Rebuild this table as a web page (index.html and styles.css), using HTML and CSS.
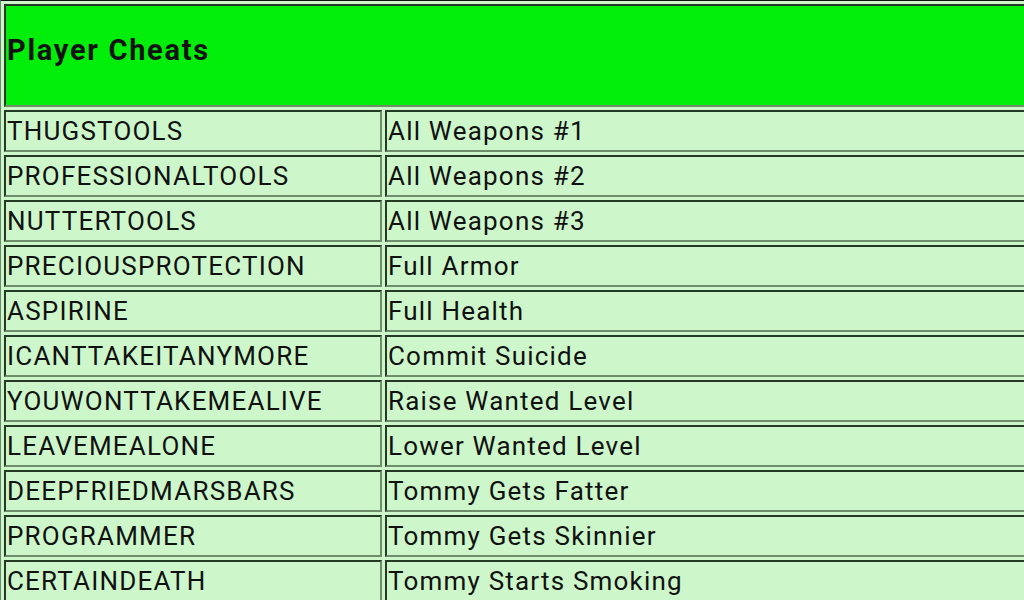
FILE: index.html
```html
<!DOCTYPE html>
<html>
<head>
<meta charset="utf-8">
<link rel="stylesheet" href="styles.css">
</head>
<body>
<div class="page">
<table class="cheats">
  <thead>
    <tr><th colspan="2" class="head">Player Cheats</th></tr>
  </thead>
  <tbody>
    <tr><td class="code">THUGSTOOLS</td><td class="desc">All Weapons #1</td></tr>
    <tr><td class="code">PROFESSIONALTOOLS</td><td class="desc">All Weapons #2</td></tr>
    <tr><td class="code">NUTTERTOOLS</td><td class="desc">All Weapons #3</td></tr>
    <tr><td class="code">PRECIOUSPROTECTION</td><td class="desc">Full Armor</td></tr>
    <tr><td class="code">ASPIRINE</td><td class="desc">Full Health</td></tr>
    <tr><td class="code">ICANTTAKEITANYMORE</td><td class="desc">Commit Suicide</td></tr>
    <tr><td class="code">YOUWONTTAKEMEALIVE</td><td class="desc">Raise Wanted Level</td></tr>
    <tr><td class="code">LEAVEMEALONE</td><td class="desc">Lower Wanted Level</td></tr>
    <tr><td class="code">DEEPFRIEDMARSBARS</td><td class="desc">Tommy Gets Fatter</td></tr>
    <tr><td class="code">PROGRAMMER</td><td class="desc">Tommy Gets Skinnier</td></tr>
    <tr><td class="code">CERTAINDEATH</td><td class="desc">Tommy Starts Smoking</td></tr>
  </tbody>
</table>
</div>
</body>
</html>
```

FILE: styles.css
```css
html, body {
  margin: 0;
  padding: 0;
  background: #cdf7cb;
  overflow: hidden;
}
.page {
  width: 1024px;
  height: 600px;
  overflow: hidden;
}
.cheats {
  width: 1040px;
  margin: -1px 0 0 0;
  border-collapse: separate;
  border-spacing: 3px;
  border-top: 2px solid #111;
  border-left: 1px solid #6c8a6a;
  background: #cdf7cb;
  font-family: Roboto, "Noto Sans", sans-serif;
  color: #111;
}
.cheats th,
.cheats td {
  border-style: solid;
  border-width: 2px;
  border-color: #243a24 #6d8d6b #6d8d6b #243a24;
  text-align: left;
  padding: 0 0 0 1px;
  white-space: nowrap;
}
.head {
  background: #00ee0a;
  height: 88px;
  padding-bottom: 11px !important;
  font-size: 29px;
  letter-spacing: 1.7px;
  font-weight: bold;
  border-color: #0c2a0c #3ca63c #3ca63c #0c2a0c;
}
.code,
.desc {
  height: 38px;
  font-size: 26px;
  letter-spacing: 1.2px;
  background: #cdf7cb;
}
.code {
  width: 373px;
}
```
